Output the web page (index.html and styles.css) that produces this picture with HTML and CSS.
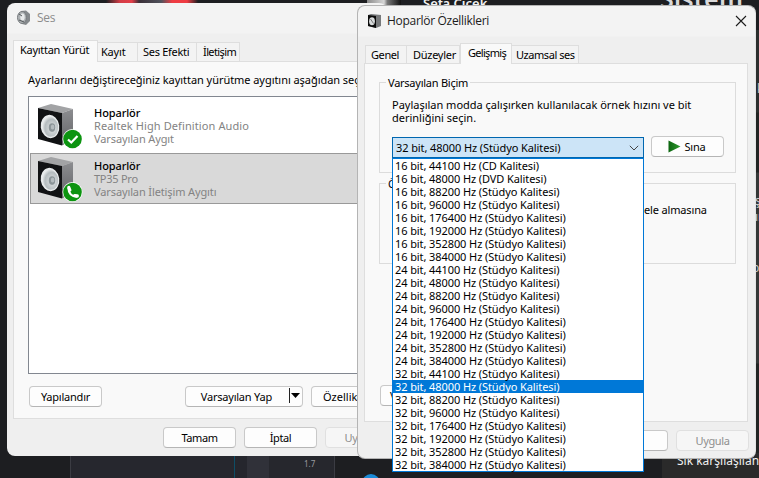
FILE: index.html
```html
<!DOCTYPE html>
<html lang="tr">
<head>
<meta charset="utf-8">
<title>Ses</title>
<link rel="stylesheet" href="styles.css">
</head>
<body>
<svg width="0" height="0" class="defs" aria-hidden="true">
  <defs>
    <linearGradient id="side" x1="0" y1="0" x2="0" y2="1"><stop offset="0" stop-color="#8c8d90"/><stop offset="1" stop-color="#626367"/></linearGradient>
    <radialGradient id="cone" cx=".6" cy=".6" r=".65"><stop offset="0" stop-color="#8d969a"/><stop offset=".3" stop-color="#cfd4d6"/><stop offset=".7" stop-color="#b5bcbf"/><stop offset="1" stop-color="#eef0f1"/></radialGradient>
    <linearGradient id="play" x1="0" y1="0" x2="1" y2="0"><stop offset="0" stop-color="#0b640f"/><stop offset="1" stop-color="#2f9a2e"/></linearGradient>
    <g id="speaker">
      <path d="M0 4 L13 0 L35 5 L24 9 Z" fill="#a2a3a5"/>
      <path d="M24 9 L35 5 V35 L24 41.500 Z" fill="url(#side)"/>
      <path d="M0 4 L24 9 V41.500 L0 35 Z" fill="#111214"/>
      <ellipse cx="12" cy="22.500" rx="9.300" ry="11.700" fill="#e7eaeb" transform="rotate(-8 12 22.500)"/>
      <ellipse cx="12.300" cy="22.700" rx="7.800" ry="10" fill="url(#cone)" transform="rotate(-8 12 22.500)"/>
      <ellipse cx="14" cy="23.500" rx="3.200" ry="4.200" fill="#8b9498"/>
      <ellipse cx="14.600" cy="23" rx="1.800" ry="2.600" fill="#b5bcbf"/>
    </g>
  </defs>
</svg>
<div class="desktop">
  <div class="photo"></div>
  <div class="pane-a"></div>
  <div class="pane-b"></div>
  <div class="axis">1.7</div>
  <div class="avatar"></div>
  <div class="dot"></div>
  <div class="person">Sefa Çicek</div>
  <div class="heading">Sistem</div>
  <div class="faq">Sık karşılaşılan</div>
  <div class="edge"></div>
  <div class="edge-text e1">k</div>
  <div class="edge-text e2">ş</div>
  <div class="edge-text e3">ın</div>
  <div class="edge-text e4">bi</div>

  <section class="win sound">
    <header class="title">
      <svg width="14" height="16" viewBox="0 0 14 16"><path d="M4 1 L9 .5 L13 4 V11 L9 15 L5 14 Z" fill="#85898c"/><ellipse cx="5" cy="7.500" rx="4.500" ry="6" fill="#aeb2b4" stroke="#777b7e"/><ellipse cx="5.500" cy="7" rx="2.200" ry="3.500" fill="#e8eaeb"/><path d="M2 10 L7 12 M2 4 L5 6" stroke="#55595c"/></svg>
      <span>Ses</span>
    </header>
    <nav class="tabs">
      <span class="tab on t1">Kayıttan Yürüt</span><span class="tab t2">Kayıt</span><span class="tab t3">Ses Efekti</span><span class="tab t4">İletişim</span>
    </nav>
    <div class="page">
      <p class="hint">Ayarlarını değiştireceğiniz kayıttan yürütme aygıtını aşağıdan seçin:</p>
      <div class="devices">
        <div class="device">
          <svg class="pic" width="46" height="46" viewBox="0 0 46 46"><use href="#speaker"/><circle cx="34.500" cy="35" r="10" fill="#fff"/><circle cx="34.500" cy="35" r="9.300" fill="#0c9410"/><path d="M30 35.500 L33.300 38.500 L39.500 32" fill="none" stroke="#fff" stroke-width="2.200"/></svg>
          <div class="info"><b class="name">Hoparlör</b><span class="driver">Realtek High Definition Audio</span><span class="state">Varsayılan Aygıt</span></div>
        </div>
        <div class="device picked">
          <svg class="pic" width="46" height="46" viewBox="0 0 46 46"><use href="#speaker"/><circle cx="34.500" cy="35" r="10" fill="#fff"/><circle cx="34.500" cy="35" r="9.300" fill="#0c9410"/><path d="M30.500 31 C30.500 36 33.500 39.500 39 39.700" fill="none" stroke="#fff" stroke-width="2.200"/><path d="M30.800 30.500 L31.800 33 M36.800 38.700 L39.300 39" stroke="#fff" stroke-width="3.300" stroke-linecap="round"/></svg>
          <div class="info"><b class="name">Hoparlör</b><span class="driver short">TP35 Pro</span><span class="state">Varsayılan İletişim Aygıtı</span></div>
        </div>
      </div>
      <div class="row">
        <button class="btn conf">Yapılandır</button>
        <button class="btn split"><span>Varsayılan Yap</span><svg width="12" height="16" viewBox="0 0 12 16"><path d="M.5 0 V15" stroke="#222"/><path d="M2 5 H11 L6.500 10 Z" fill="#000"/></svg></button>
        <button class="btn prop">Özellikler</button>
      </div>
    </div>
    <footer class="foot"><button class="btn">Tamam</button><button class="btn">İptal</button><button class="btn off">Uygula</button></footer>
  </section>

  <section class="win props">
    <header class="title">
      <svg width="13" height="14" viewBox="0 0 13 14"><path d="M0 1 L3 0 L13 1 V12 L8 14 L0 12 Z" fill="#77797b"/><path d="M0 1 L8 2 V14 L0 12 Z" fill="#0b0b0b"/><ellipse cx="4" cy="7.200" rx="2.900" ry="4" fill="#d9dcdd"/><path d="M2.500 5 L5.500 9.500" stroke="#777"/></svg>
      <span>Hoparlör Özellikleri</span>
      <svg class="close" width="12" height="12" viewBox="0 0 12 12"><path d="M1 1 L11 11 M11 1 L1 11" stroke="#1b1b1b" stroke-width="1.100"/></svg>
    </header>
    <nav class="tabs">
      <span class="tab p1">Genel</span><span class="tab p2">Düzeyler</span><span class="tab on p3">Gelişmiş</span><span class="tab p4">Uzamsal ses</span>
    </nav>
    <div class="page">
      <div class="group g1">
        <span class="legend">Varsayılan Biçim</span>
        <p class="note">Paylaşılan modda çalışırken kullanılacak örnek hızını ve bit<br>derinliğini seçin.</p>
        <div class="pick">
          <div class="combo">
            <span>32 bit, 48000 Hz (Stüdyo Kalitesi)</span>
            <svg width="10" height="6" viewBox="0 0 10 6"><path d="M.8 .8 L5 5 L9.200 .8" fill="none" stroke="#444"/></svg>
            <ul class="list">
              <li>16 bit, 44100 Hz (CD Kalitesi)</li><li>16 bit, 48000 Hz (DVD Kalitesi)</li><li>16 bit, 88200 Hz (Stüdyo Kalitesi)</li><li>16 bit, 96000 Hz (Stüdyo Kalitesi)</li><li>16 bit, 176400 Hz (Stüdyo Kalitesi)</li><li>16 bit, 192000 Hz (Stüdyo Kalitesi)</li><li>16 bit, 352800 Hz (Stüdyo Kalitesi)</li><li>16 bit, 384000 Hz (Stüdyo Kalitesi)</li>
              <li>24 bit, 44100 Hz (Stüdyo Kalitesi)</li><li>24 bit, 48000 Hz (Stüdyo Kalitesi)</li><li>24 bit, 88200 Hz (Stüdyo Kalitesi)</li><li>24 bit, 96000 Hz (Stüdyo Kalitesi)</li><li>24 bit, 176400 Hz (Stüdyo Kalitesi)</li><li>24 bit, 192000 Hz (Stüdyo Kalitesi)</li><li>24 bit, 352800 Hz (Stüdyo Kalitesi)</li><li>24 bit, 384000 Hz (Stüdyo Kalitesi)</li>
              <li>32 bit, 44100 Hz (Stüdyo Kalitesi)</li><li class="cur">32 bit, 48000 Hz (Stüdyo Kalitesi)</li><li>32 bit, 88200 Hz (Stüdyo Kalitesi)</li><li>32 bit, 96000 Hz (Stüdyo Kalitesi)</li><li>32 bit, 176400 Hz (Stüdyo Kalitesi)</li><li>32 bit, 192000 Hz (Stüdyo Kalitesi)</li><li>32 bit, 352800 Hz (Stüdyo Kalitesi)</li><li>32 bit, 384000 Hz (Stüdyo Kalitesi)</li>
            </ul>
          </div>
          <button class="btn test"><svg width="13" height="13" viewBox="0 0 13 13"><path d="M.5 .5 L12.500 6.500 L.5 12.500 Z" fill="url(#play)"/></svg>Sına</button>
        </div>
      </div>
      <div class="group g2">
        <span class="legend">Ö</span>
        <p class="tail">ele almasına</p>
      </div>
      <button class="btn defaults">V</button>
    </div>
    <footer class="foot"><button class="btn"></button><button class="btn off">Uygula</button></footer>
  </section>
</div>
</body>
</html>
```
FILE: styles.css
```css
* { box-sizing: border-box; }
body { margin: 0; font: 11px/13px "Noto Sans", "Open Sans", sans-serif; color: #000; }
p, ul { margin: 0; padding: 0; list-style: none; }
.defs { position: absolute; }
.desktop { position: relative; width: 759px; height: 478px; overflow: hidden; background: #1d1e21; }
.desktop > div { position: absolute; white-space: nowrap; }
.photo { left: 76px; top: 0; width: 54px; height: 4px; margin-left: 30px; width: 92px; background: linear-gradient(90deg, #1d1e21, #d23c46 15%, #e33e48 28%, #3a2f38 36%, #50525c 60%, #ee3b42 72%, #ee3b42 88%, #1d1e21); }
.pane-a { left: 70px; top: 456px; width: 165px; height: 22px; background: #26272e; border-left: 1px solid #3b3c43; border-right: 1px solid #0e4e66; }
.pane-b { left: 235px; top: 456px; width: 100px; height: 22px; background: linear-gradient(90deg, #25262d 12px, #303139 12px, #303139 34px, #26272d 34px); border-right: 1px solid #3b3c43; }
.axis { left: 304px; top: 457px; font-size: 8px; color: #9a9a9f; }
.avatar { left: 367px; top: 0; width: 34px; height: 5px; background: linear-gradient(90deg, #8b8b8b, #d5d5d5 50%, #777 60%, #111); }
.dot { left: 362px; top: 474px; width: 18px; height: 18px; border-radius: 50%; background: #1b8bd8; }
.person { left: 423px; top: -5px; font-size: 13px; line-height: 16px; font-weight: 600; color: #f2f2f2; }
.heading { left: 660px; top: -16px; font-size: 25px; line-height: 28px; font-weight: 600; letter-spacing: .2px; color: #d9d9d9; }
.faq { left: 662px; top: 453px; width: 97px; height: 25px; padding-left: 15px; background: #2a2a2a; color: #f0f0f0; font-size: 12px; line-height: 15px; }
.edge { left: 750px; top: 30px; width: 9px; height: 423px; background: linear-gradient(#2b2e2d 82px, #212322 83px, #212322 142px, #343736 143px, #343736 333px, #222423 334px); }
.edge-text { left: 757px; font-size: 12px; color: #ccc; }
.e1 { top: 82px; }
.e2 { top: 194px; left: 755px; }
.e3 { top: 210px; left: 755px; }
.e4 { top: 261px; left: 752px; }

.win { position: absolute; display: flex; flex-direction: column; border-radius: 8px; background: linear-gradient(#f3f3f3 30px, #efefef 31px); }
.sound { left: 7px; top: 3px; width: 380px; height: 453px; padding: 0 6px; overflow: hidden; }
.props { left: 357px; top: 5px; width: 399px; height: 454px; padding: 0 7px 0 6px; border: 1px solid #b4b4b4; border-right-color: #e4e4e4; }
.title { display: flex; align-items: center; flex: none; font: 12px/16px "Open Sans", sans-serif; }
.sound .title { height: 30px; padding: 0 0 0 4px; gap: 6px; color: #8c8c8c; letter-spacing: -.3px; }
.props .title { height: 30px; padding-left: 4px; gap: 6px; color: #1b1b1b; letter-spacing: -.3px; }
.close { margin-left: auto; margin-right: 1px; }
.tabs { display: flex; align-items: flex-end; flex: none; position: relative; z-index: 1; letter-spacing: -.28px; }
.tab { display: block; height: 18px; border: 1px solid #dedede; border-left: 0; border-bottom: 0; background: #f3f3f3; padding: 2px 0 0 5px; white-space: nowrap; }
.tab.on { height: 21px; margin-bottom: -1px; background: #f9f9f9; border-left: 1px solid #dedede; padding-left: 6px; }
.sound .tabs { height: 28px; }
.sound .tab { height: 19px; }
.sound .tab.on { height: 22px; }
.props .tabs { height: 27px; padding-left: 1px; }
.t1 { width: 85px; } .t2 { width: 40px; padding-left: 3px; letter-spacing: -.2px; } .t3 { width: 59px; } .t4 { width: 43px; padding-left: 6px; letter-spacing: -.6px; }
.p1 { width: 42px; border-left: 1px solid #dedede; letter-spacing: -.4px; } .p2 { width: 53px; padding-left: 6px; } .p3 { width: 52px; letter-spacing: -.7px; } .p3.on { padding-left: 7px; } .p4 { width: 67px; padding-left: 4px; letter-spacing: -.45px; }
.page { flex: none; border: 1px solid #dedede; background: #f9f9f9; }
.sound .page { height: 358px; padding: 11px 0 0 14px; }
.hint { white-space: nowrap; letter-spacing: -.05px; }
.devices { height: 278px; margin-top: 10px; background: #fff; border: 1px solid #828790; padding: 4px 0 0 1px; }
.device { display: flex; height: 52px; padding: 3px 0 0 8px; }
.device.picked { height: 51px; background: #d9d9d9; border: 1px solid #999; padding: 3px 0 0 7px; }
.device .pic { flex: none; margin-right: 10px; }
.info { display: flex; flex-direction: column; align-items: flex-start; padding-top: 2px; color: #838383; white-space: nowrap; }
.name { color: #000; font-weight: 500; letter-spacing: -.1px; }
.driver { letter-spacing: .1px; }
.driver.short { letter-spacing: -.25px; }
.state { letter-spacing: -.12px; }
.row { display: flex; margin-top: 12px; }
.btn { flex: none; height: 21px; width: 73px; padding: 0 0 1px; border: 1px solid #c9c9c9; border-bottom-color: #b5b5b5; border-radius: 4px; background: #fdfdfd; font: inherit; letter-spacing: -.22px; color: #000; display: flex; align-items: center; justify-content: center; white-space: nowrap; }
.btn.off { background: #f6f6f6; border-color: #e0e0e0; color: #8e8e8e; }
.conf { margin-left: 1px; }
.split { width: 118px; margin-left: 83px; justify-content: flex-end; gap: 17px; padding-right: 1px; }
.prop { margin-left: 8px; width: 78px; justify-content: flex-start; padding-left: 11px; letter-spacing: 0; }
.sound .foot { display: flex; gap: 8px; padding: 8px 0 0 150px; }
.foot .btn { letter-spacing: -.4px; }
.props .page { height: 359px; width: 384px; padding: 18px 0 0 14px; }
.group { border: 1px solid #dcdcdc; width: 357px; position: relative; }
.g1 { height: 91px; padding: 15px 0 0 12px; }
.g2 { height: 81px; margin-top: 10px; }
.legend { position: absolute; left: 6px; top: -7px; padding: 0 2px; background: #f9f9f9; white-space: nowrap; letter-spacing: -.25px; }
.note { white-space: nowrap; letter-spacing: -.01px; }
.pick { display: flex; margin-top: 13px; }
.combo { position: relative; width: 252px; height: 21px; background: #cce4f7; border: 1px solid #0067b0; padding: 0 4px 0 3px; display: flex; align-items: center; justify-content: space-between; white-space: nowrap; letter-spacing: -.09px; }
.list { position: absolute; z-index: 2; left: -1px; top: 20px; width: 252px; height: 314px; background: #fff; border: 1px solid #0078d7; }
.list li { height: 13px; line-height: 13px; padding-left: 2px; }
.list .cur { background: #0078d7; color: #fff; }
.test { margin-left: 7px; gap: 4px; margin-top: -1px; padding-right: 2px; }
.tail { padding: 19px 0 0 264px; white-space: nowrap; letter-spacing: -.15px; }
.defaults { margin: 121px 0 0 1px; width: 100px; justify-content: flex-start; padding-left: 9px; }
.props .foot { display: flex; gap: 8px; padding: 8px 0 0 231px; }
```
